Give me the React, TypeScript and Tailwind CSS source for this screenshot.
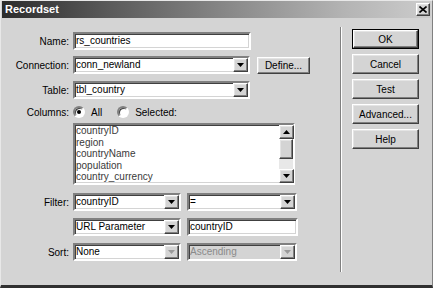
import React from "react";

const sunken =
  "border-2 border-t-[#808080] border-l-[#808080] border-b-white border-r-white shadow-[inset_1px_1px_0_#404040,inset_-1px_-1px_0_#d4d4d4]";
const raised =
  "border border-t-white border-l-white border-b-[#404040] border-r-[#404040] shadow-[inset_-1px_-1px_0_#808080,inset_1px_1px_0_#e4e4e4]";

function Arrow({ up = false, disabled = false }: { up?: boolean; disabled?: boolean }) {
  return (
    <svg width="7" height="4" viewBox="0 0 7 4" className={up ? "rotate-180" : ""}>
      <polygon points="0,0 7,0 3.5,4" fill={disabled ? "#9a9a9a" : "#000"} />
    </svg>
  );
}

function ArrowBtn({ disabled = false, up = false }: { disabled?: boolean; up?: boolean }) {
  return (
    <div className={`w-[15px] h-full flex items-center justify-center bg-[#d4d4d4] ${raised}`}>
      <Arrow disabled={disabled} up={up} />
    </div>
  );
}

function Select({
  w,
  value,
  disabled = false,
  arrowDisabled = false,
}: {
  w: string;
  value: string;
  disabled?: boolean;
  arrowDisabled?: boolean;
}) {
  return (
    <div
      className={`${w} h-[18px] flex ${sunken} ${disabled ? "bg-[#d4d4d4] text-[#8a8a8a]" : "bg-white"}`}
    >
      <div className="flex-1 pl-[1px] leading-[14px] whitespace-nowrap overflow-hidden">{value}</div>
      <ArrowBtn disabled={disabled || arrowDisabled} />
    </div>
  );
}

function Input({ w, value }: { w: string; value: string }) {
  return (
    <div className={`${w} h-[18px] bg-white ${sunken} pl-[1px] leading-[14px] whitespace-nowrap`}>{value}</div>
  );
}

function Label({ text }: { text: string }) {
  return <div className="w-[67px] text-right whitespace-nowrap">{text}</div>;
}

function Button({ text, w = "w-[67px]", h = "h-[20px]" }: { text: string; w?: string; h?: string }) {
  return (
    <div className={`${w} ${h} bg-[#d4d4d4] ${raised} flex items-center justify-center whitespace-nowrap`}>
      {text}
    </div>
  );
}

function Radio({ checked }: { checked: boolean }) {
  return (
    <div className="w-[12px] h-[12px] rounded-full bg-white border-2 border-t-[#808080] border-l-[#808080] border-b-white border-r-white shadow-[inset_1px_1px_0_#404040] flex items-center justify-center">
      {checked && <div className="w-[4px] h-[4px] rounded-full bg-black" />}
    </div>
  );
}

export default function App() {
  const items = ["countryID", "region", "countryName", "population", "country_currency"];
  return (
    <div className="w-[433px] h-[288px] bg-[#d4d4d4] flex flex-col overflow-hidden font-['Liberation_Sans',Arial,sans-serif] text-[10px] text-black border-l border-t border-l-[#e8e8e8] border-t-[#e8e8e8] border-r border-r-[#808080] border-b-[3px] border-b-[#303030] px-[1px] pt-[0px]">
      {/* Title bar */}
      <div className="h-[17px] shrink-0 flex items-center justify-between bg-[linear-gradient(to_right,#2c2c2c,#5a5a5a_25%,#8c8c8c_55%,#b4b4b4_80%,#cccccc)] pl-[3px] pr-[1px]">
        <span className="text-white font-bold text-[11px] leading-none">Recordset</span>
        <div className={`w-[14px] h-[13px] bg-[#d4d4d4] ${raised} flex items-center justify-center`}>
          <svg width="8" height="7" viewBox="0 0 8 7">
            <path d="M0.5 0.5 L7.5 6.5 M7.5 0.5 L0.5 6.5" stroke="#000" strokeWidth="1.6" />
          </svg>
        </div>
      </div>

      <div className="flex flex-1">
        {/* left part */}
        <div className="w-[338px] flex flex-col pt-[14px]">
          <div className="flex items-center gap-[4px] h-[18px]">
            <Label text="Name:" />
            <Input w="w-[178px]" value="rs_countries" />
          </div>
          <div className="flex items-center gap-[4px] h-[18px] mt-[6px]">
            <Label text="Connection:" />
            <Select w="w-[177px]" value="conn_newland" />
            <div className="ml-[3px]">
              <Button text="Define..." w="w-[53px]" h="h-[17px]" />
            </div>
          </div>
          <div className="flex items-center gap-[4px] h-[18px] mt-[7px]">
            <Label text="Table:" />
            <Select w="w-[177px]" value="tbl_country" />
          </div>
          <div className="flex items-center gap-[4px] h-[12px] mt-[7px]">
            <Label text="Columns:" />
            <div className="flex items-center">
              <Radio checked />
              <span className="ml-[6px]">All</span>
              <div className="ml-[15px]">
                <Radio checked={false} />
              </div>
              <span className="ml-[6px]">Selected:</span>
            </div>
          </div>
          <div className="flex gap-[4px] mt-[5px]">
            <div className="w-[67px]" />
            <div className={`w-[222px] h-[62px] bg-white ${sunken} flex`}>
              <div className="flex-1 pl-[1px] text-[#3a3a3a] leading-[11.5px] overflow-hidden">
                {items.map((it) => (
                  <div key={it}>{it}</div>
                ))}
              </div>
              <div className="w-[14px] h-full flex flex-col bg-[#e8e8e8]">
                <div className="h-[14px]">
                  <ArrowBtn up />
                </div>
                <div className={`h-[20px] bg-[#d4d4d4] ${raised}`} />
                <div className="flex-1" />
                <div className="h-[14px]">
                  <ArrowBtn />
                </div>
              </div>
            </div>
          </div>
          <div className="flex items-center gap-[4px] h-[18px] mt-[8px]">
            <Label text="Filter:" />
            <Select w="w-[108px]" value="countryID" />
            <div className="ml-[2px]">
              <Select w="w-[110px]" value="=" />
            </div>
          </div>
          <div className="flex items-center gap-[4px] h-[18px] mt-[7px]">
            <Label text="" />
            <Select w="w-[108px]" value="URL Parameter" />
            <div className="ml-[2px]">
              <Input w="w-[111px]" value="countryID" />
            </div>
          </div>
          <div className="flex items-center gap-[4px] h-[18px] mt-[7px]">
            <Label text="Sort:" />
            <Select w="w-[108px]" value="None" arrowDisabled />
            <div className="ml-[2px]">
              <Select w="w-[110px]" value="Ascending" disabled />
            </div>
          </div>
        </div>

        {/* separator */}
        <div className="w-[2px] h-[245px] mt-[9px] border-l border-l-[#808080] border-r border-r-white" />

        {/* buttons */}
        <div className="flex flex-col gap-[5px] pl-[10px] pt-[11px]">
          <div className="border border-black w-[67px] h-[20px]">
            <Button text="OK" w="w-[65px]" h="h-[18px]" />
          </div>
          <Button text="Cancel" />
          <Button text="Test" />
          <Button text="Advanced..." />
          <Button text="Help" />
        </div>
      </div>
    </div>
  );
}
